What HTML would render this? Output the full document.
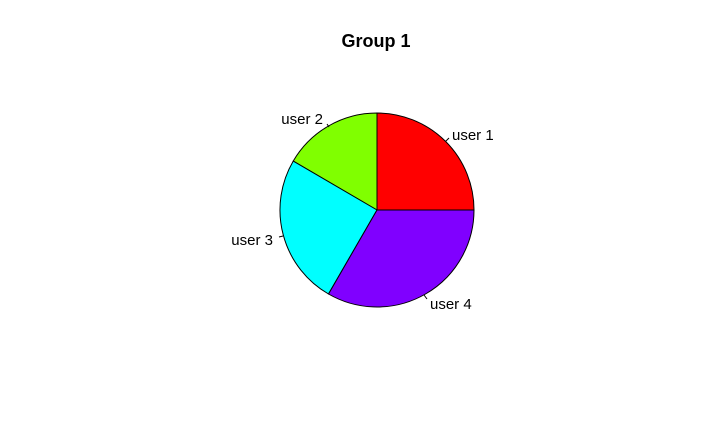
<!DOCTYPE html>
<html><head><style>html,body{margin:0;padding:0;background:#fff}</style></head>
<body>
<svg width="716" height="439" xmlns="http://www.w3.org/2000/svg" style="display:block">
<rect width="716" height="439" fill="#fff"/>
<text x="376" y="47" text-anchor="middle" font-family="Liberation Sans, sans-serif" font-weight="bold" font-size="18">Group 1</text>
<g stroke="#000" stroke-width="1">
<path d="M377,210 L474,210 A97,97 0 0 0 377,113 Z" fill="#ff0000"/>
<path d="M377,210 L377,113 A97,97 0 0 0 293.2,161.1 Z" fill="#80ff00"/>
<path d="M377,210 L293.2,161.1 A97,97 0 0 0 328.5,294 Z" fill="#00ffff"/>
<path d="M377,210 L328.5,294 A97,97 0 0 0 474,210 Z" fill="#8000ff"/>
<line x1="445.6" y1="141.4" x2="449" y2="138"/>
<line x1="327" y1="124" x2="329" y2="127"/>
<line x1="283" y1="236" x2="279" y2="237"/>
<line x1="424" y1="295" x2="427" y2="299"/>
</g>
<g font-family="Liberation Sans, sans-serif" font-size="15" fill="#000">
<text x="452" y="140">user 1</text>
<text x="323" y="124" text-anchor="end">user 2</text>
<text x="273" y="245" text-anchor="end">user 3</text>
<text x="430" y="309">user 4</text>
</g>
</svg>
</body></html>
